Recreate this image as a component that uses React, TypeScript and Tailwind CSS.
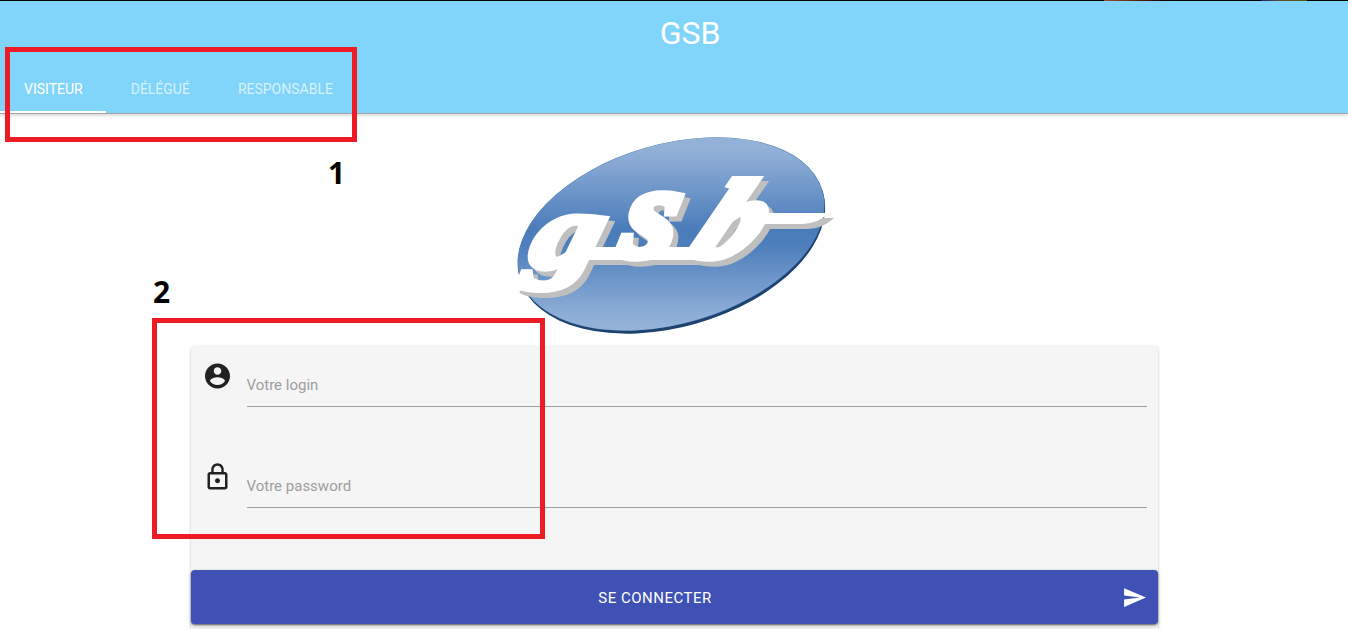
import React from "react";

function Lettering({ className }: { className: string }) {
  return (
    <g className={className} fontFamily="'Liberation Serif', serif" fontWeight="700" fontStyle="italic">
      <text transform="translate(17 137) skewX(-14) scale(1.3 1)" fontSize="106" strokeWidth="7">g</text>
      <text transform="translate(108 126) skewX(-12) scale(1.05 1)" fontSize="130" strokeWidth="9">s</text>
      <text transform="translate(177 126) skewX(-26) scale(1.12 1)" fontSize="109" strokeWidth="9">b</text>
      <path strokeWidth="0" d="M76 117H200V130H76Z" />
      <path strokeWidth="0" d="M236 95Q242 83 256 83H319Q307 94 293 94H250Z" />
    </g>
  );
}

function Logo() {
  return (
    <svg width="330" height="208" viewBox="0 0 330 208" className="block" role="img" aria-label="gsb">
      <defs>
        <linearGradient id="oval" x1="0" y1="0" x2="0" y2="1">
          <stop offset="0" stopColor="#95b3d7" />
          <stop offset="0.08" stopColor="#90afd6" />
          <stop offset="0.48" stopColor="#4a7cba" />
          <stop offset="0.56" stopColor="#4e7fbc" />
          <stop offset="0.92" stopColor="#8eaed7" />
          <stop offset="1" stopColor="#95b3d7" />
        </linearGradient>
      </defs>
      <g transform="translate(161 105)">
        <ellipse transform="translate(0.6 1) rotate(-16)" rx="157.6" ry="91" fill="#1f4370" />
        <ellipse transform="translate(0 -1) rotate(-16)" rx="157.6" ry="90" fill="#527eae" />
      </g>
      <path fill="url(#oval)" d="M8 132.4A156.3 89.2 -16 0 1 314 75.6A156.3 89.2 -16 0 1 8 132.4Z" />
      <g transform="translate(5 5)" aria-hidden="true"><Lettering className="fill-[#bfbfbf] stroke-[#bfbfbf]" /></g>
      <Lettering className="fill-white stroke-white" />
    </svg>
  );
}

function AccountIcon() {
  return (
    <svg viewBox="0 0 24 24" className="size-[30px] fill-[#212121]">
      <path transform="translate(0.4 0)" d="M12 2C6.48 2 2 6.48 2 12s4.48 10 10 10 10-4.48 10-10S17.52 2 12 2zm0 3c1.66 0 3 1.34 3 3s-1.34 3-3 3-3-1.34-3-3 1.34-3 3-3zm0 14.2c-2.5 0-4.71-1.28-6-3.22.03-1.99 4-3.08 6-3.08 1.99 0 5.97 1.09 6 3.08-1.29 1.94-3.5 3.22-6 3.22z" />
    </svg>
  );
}

function LockIcon() {
  return (
    <svg viewBox="0 0 24 24" className="size-[30px] fill-[#212121]">
      <path transform="translate(0.4 0)" d="M12 17c1.1 0 2-.9 2-2s-.9-2-2-2-2 .9-2 2 .9 2 2 2zm6-9h-1V6c0-2.76-2.24-5-5-5S7 3.24 7 6v2H6c-1.1 0-2 .9-2 2v10c0 1.1.9 2 2 2h12c1.1 0 2-.9 2-2V10c0-1.1-.9-2-2-2zM8.9 6c0-1.71 1.39-3.1 3.1-3.1s3.1 1.39 3.1 3.1v2H8.9V6zM18 20H6V10h12v10z" />
    </svg>
  );
}

function Field({ icon, type, label }: { icon: React.ReactNode; type: string; label: string }) {
  return (
    <div className="flex h-[101px] items-start px-[11px]">
      <span className="flex w-[45px] shrink-0">{icon}</span>
      <input
        type={type}
        placeholder={label}
        className="h-[46px] min-w-0 flex-1 border-b border-[#9e9e9e] bg-transparent pt-0.5 text-[15px] outline-none placeholder:text-[#9e9e9e] placeholder:opacity-100"
      />
    </div>
  );
}

export default function App() {
  return (
    <div className="relative h-[629px] overflow-hidden bg-white font-['Roboto',sans-serif] text-[#212121]">
      <header className="flex h-[113px] flex-col border-t border-black bg-[#81d4fa] text-white shadow-[0_1px_0_#a3a5a6,0_2px_4px_rgba(0,0,0,0.2)]">
        <h1 className="h-16 pl-8 text-center text-[32px] leading-[64px]">GSB</h1>
        <nav className="flex h-12 text-sm leading-[49px]">
          <a className="w-[106px] border-b-2 border-white pl-6">VISITEUR</a>
          <a className="px-[24.7px] text-white/70">DÉLÉGUÉ</a>
          <a className="pl-[23.3px] text-white/70">RESPONSABLE</a>
        </nav>
      </header>

      <div className="ml-[510px] mt-[17px] h-[216px]">
        <Logo />
      </div>

      <form className="mx-auto flex h-[300px] w-[967px] flex-col rounded-sm bg-[#f5f5f5] pt-[15px] shadow-[0_1px_3px_rgba(0,0,0,0.25)]">
        <Field icon={<AccountIcon />} type="text" label="Votre login" />
        <Field icon={<LockIcon />} type="password" label="Votre password" />
        <button
          type="button"
          className="mt-[7px] flex h-[54px] items-center rounded-sm bg-[#3f51b5] pr-[11px] text-[15px] tracking-[0.5px] text-white shadow-[0_1px_2px_rgba(0,0,0,0.55),0_2px_5px_rgba(0,0,0,0.16)]"
        >
          <span className="flex-1 pr-0.5 pt-0.5 text-center">SE CONNECTER</span>
          <svg viewBox="0 0 24 24" className="size-[25px] fill-white"><path d="M2.01 21L23 12 2.01 3 2 10l15 2-15 2z" /></svg>
        </button>
      </form>

      <div className="absolute left-[5px] top-[47px] h-[95px] w-[352px] border-[5px] border-[#ed1c24]" />
      <div className="absolute left-[152px] top-[318px] h-[221px] w-[393px] border-[5px] border-[#ed1c24]" />
      <span className="absolute left-[328px] top-[153px] font-['Open_Sans',sans-serif] text-[30px] font-bold leading-[40px] text-black">1</span>
      <span className="absolute left-[153px] top-[272px] font-['Open_Sans',sans-serif] text-[30px] font-bold leading-[40px] text-black">2</span>
      <div className="absolute left-[1104px] top-0 h-px w-[80px] bg-gradient-to-r from-[#a05030] via-[#4a1708] to-black" />
      <div className="absolute left-[1261px] top-0 h-px w-[46px] bg-gradient-to-r from-[#1c2270] via-[#6b5018] to-[#55580f]" />
    </div>
  );
}
